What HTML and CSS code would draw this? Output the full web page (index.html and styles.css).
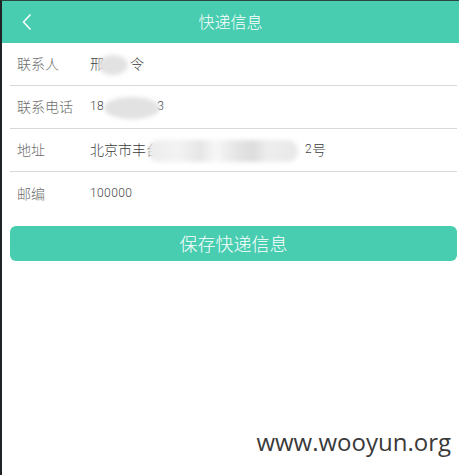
FILE: index.html
```html
<!DOCTYPE html>
<html lang="zh">
<head>
<meta charset="utf-8">
<title>快递信息</title>
<link rel="stylesheet" href="styles.css">
</head>
<body>
<div class="screen">
  <header class="topbar">
    <span class="back">
      <svg width="12" height="18" viewBox="0 0 12 18"><path d="M9.5 1.5 L2.5 9 L9.5 16.5" fill="none" stroke="#ffffff" stroke-width="1.5"/></svg>
    </span>
    <h1 class="title">快递信息</h1>
  </header>
  <div class="list">
    <div class="row">
      <span class="label">联系人</span>
      <span class="value">邢<span class="gap g1"></span>令<span class="blob b1"></span></span>
    </div>
    <div class="row">
      <span class="label">联系电话</span>
      <span class="value"><span class="num">18</span><span class="gap g2"></span><span class="num">3</span><span class="blob b2"></span></span>
    </div>
    <div class="row">
      <span class="label">地址</span>
      <span class="value">北京市丰台<span class="gap g3"></span><span class="num">2</span>号<span class="blob b3"></span></span>
    </div>
    <div class="row last">
      <span class="label">邮编</span>
      <span class="value"><span class="num">100000</span></span>
    </div>
  </div>
  <button class="save">保存快递信息</button>
  <div class="mark">www.wooyun.org</div>
</div>
</body>
</html>
```
FILE: styles.css
```css
html, body {
  margin: 0;
  padding: 0;
  background: #ffffff;
}
body {
  font-family: "Noto Sans CJK SC", "Noto Sans", sans-serif;
}
.screen {
  width: 457px;
  height: 474px;
  border-left: 2px solid #1f2326;
  border-top: 1px solid #2c4741;
  display: flex;
  flex-direction: column;
  position: relative;
  overflow: hidden;
}
.topbar {
  height: 42px;
  background: #48cdb0;
  display: flex;
  align-items: center;
  justify-content: center;
  position: relative;
}
.back {
  position: absolute;
  left: 19px;
  top: 12px;
  display: flex;
}
.title {
  margin: 0 0 2px 0;
  font-size: 16px;
  font-weight: 300;
  color: #ffffff;
  line-height: 20px;
}
.list {
  display: flex;
  flex-direction: column;
  padding-left: 8px;
  padding-right: 2px;
}
.row {
  display: flex;
  align-items: center;
  padding-bottom: 2px;
  box-sizing: border-box;
  height: 43px;
  border-bottom: 1px solid #d9d9d9;
}
.row.last {
  border-bottom: none;
}
.label {
  width: 80px;
  box-sizing: border-box;
  padding-left: 7px;
  font-size: 14px;
  font-weight: 300;
  color: #6e6e6e;
}
.value {
  font-size: 14px;
  font-weight: 300;
  color: #3a3a3a;
  position: relative;
  display: flex;
  align-items: center;
}
.num {
  font-family: "Roboto", sans-serif;
  font-size: 12px;
  font-weight: 300;
  color: #444444;
  letter-spacing: 0.4px;
}
.gap { display: inline-block; }
.g1 { width: 26px; }
.g2 { width: 53px; }
.g3 { width: 145px; }
.blob {
  position: absolute;
  top: 50%;
  background: #e2e2e2;
  border-radius: 50%;
  filter: blur(2px);
}
.b1 { left: 8px; width: 30px; height: 20px; margin-top: -8px; }
.b2 { left: 14px; width: 56px; height: 22px; margin-top: -9px; }
.b3 {
  left: 58px;
  width: 150px;
  height: 22px;
  margin-top: -9px;
  border-radius: 10px;
  background: linear-gradient(90deg, #ececec 0%, #f3f3f3 20%, #e6e6e6 35%, #f7f7f7 45%, #e4e4e4 60%, #dddddd 70%, #eeeeee 80%, #e8e8e8 100%);
}
.save {
  margin: 11px 2px 0 8px;
  height: 35px;
  border: none;
  border-radius: 6px;
  background: #48cdb0;
  color: #ffffff;
  font-family: "Noto Sans CJK SC", sans-serif;
  font-size: 18px;
  font-weight: 300;
  padding: 0;
  line-height: 35px;
}
.mark {
  position: absolute;
  right: 8px;
  bottom: 17px;
  font-family: "Open Sans", sans-serif;
  font-size: 24px;
  color: #3a3a3a;
}
```
